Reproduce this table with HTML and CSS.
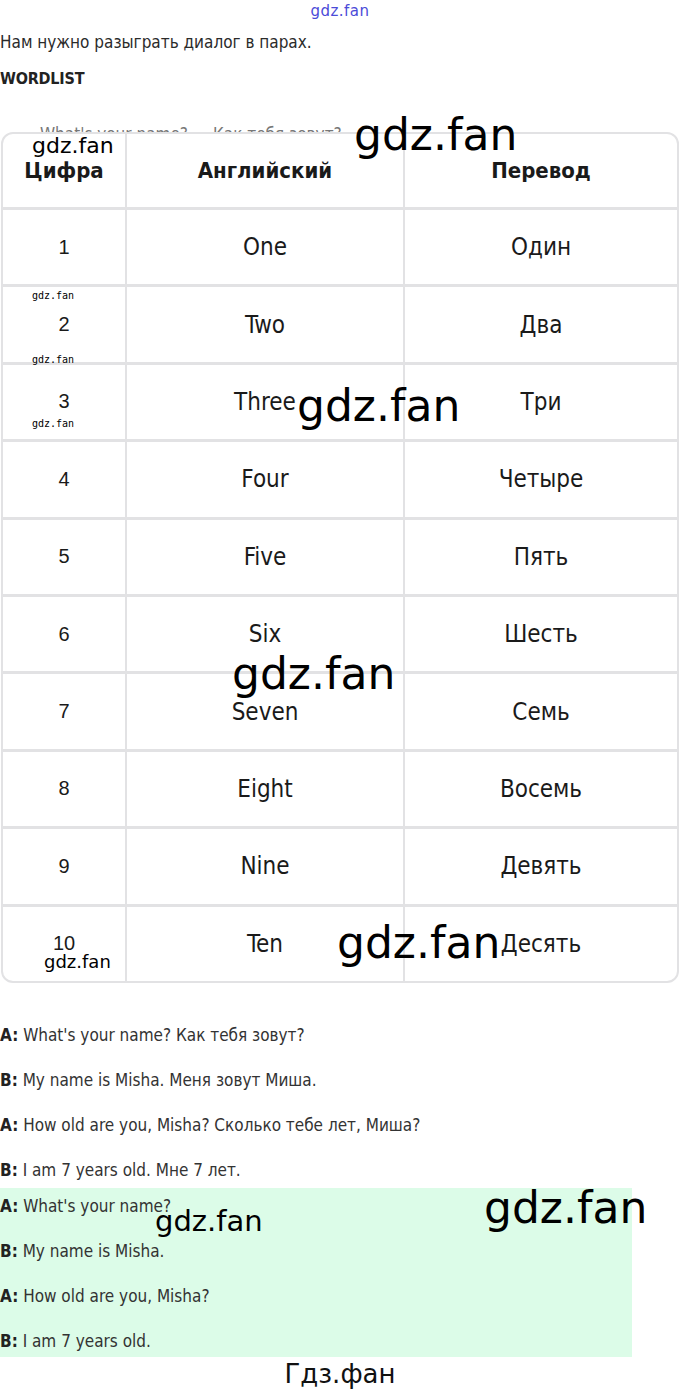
FILE: index.html
```html
<!DOCTYPE html>
<html lang="ru">
<head>
<meta charset="utf-8">
<title>Wordlist</title>
<link rel="stylesheet" href="styles.css">
</head>
<body>
<div class="site-mark">gdz.fan</div>
<p class="intro">Нам нужно разыграть диалог в парах.</p>
<h3 class="wordlist">WORDLIST</h3>
<p class="faded">What's your name? — Как тебя зовут?</p>
<div class="card">
  <div class="grid">
    <div class="cell head">Цифра</div>
    <div class="cell head">Английский</div>
    <div class="cell head">Перевод</div>
    <div class="cell num">1</div><div class="cell">One</div><div class="cell">Один</div>
    <div class="cell num">2</div><div class="cell">Two</div><div class="cell">Два</div>
    <div class="cell num">3</div><div class="cell">Three</div><div class="cell">Три</div>
    <div class="cell num">4</div><div class="cell">Four</div><div class="cell">Четыре</div>
    <div class="cell num">5</div><div class="cell">Five</div><div class="cell">Пять</div>
    <div class="cell num">6</div><div class="cell">Six</div><div class="cell">Шесть</div>
    <div class="cell num">7</div><div class="cell">Seven</div><div class="cell">Семь</div>
    <div class="cell num">8</div><div class="cell">Eight</div><div class="cell">Восемь</div>
    <div class="cell num">9</div><div class="cell">Nine</div><div class="cell">Девять</div>
    <div class="cell num">10</div><div class="cell">Ten</div><div class="cell">Десять</div>
  </div>
</div>
<div class="dialog">
  <p><b>A:</b> What's your name? Как тебя зовут?</p>
  <p><b>B:</b> My name is Misha. Меня зовут Миша.</p>
  <p><b>A:</b> How old are you, Misha? Сколько тебе лет, Миша?</p>
  <p><b>B:</b> I am 7 years old. Мне 7 лет.</p>
</div>
<div class="dialog green">
  <p><b>A:</b> What's your name?</p>
  <p><b>B:</b> My name is Misha.</p>
  <p><b>A:</b> How old are you, Misha?</p>
  <p><b>B:</b> I am 7 years old.</p>
</div>
<div class="footer-mark">Гдз.фан</div>

<div class="wm wm-big wm1">gdz.fan</div>
<div class="wm wm2">gdz.fan</div>
<div class="wm wm-tiny wm3">gdz.fan</div>
<div class="wm wm-tiny wm4">gdz.fan</div>
<div class="wm wm-tiny wm5">gdz.fan</div>
<div class="wm wm-big wm6">gdz.fan</div>
<div class="wm wm-big wm7">gdz.fan</div>
<div class="wm wm-big wm8">gdz.fan</div>
<div class="wm wm9">gdz.fan</div>
<div class="wm wm10">gdz.fan</div>
<div class="wm wm-big wm11">gdz.fan</div>
</body>
</html>
```
FILE: styles.css
```css
html, body {
  margin: 0;
  padding: 0;
  background: #fff;
}
body {
  position: relative;
  width: 680px;
  min-height: 1391px;
  font-family: "DejaVu Sans Condensed", "Liberation Sans", sans-serif;
  color: #2b2b2b;
}
.site-mark {
  height: 24px;
  text-align: center;
  font-family: "DejaVu Sans", sans-serif;
  font-size: 15px;
  line-height: 22px;
  color: #4b4bd8;
  letter-spacing: 0.5px;
}
.intro {
  margin: 6px 0 0;
  font-size: 17px;
  line-height: 24px;
}
.wordlist {
  margin: 15px 0 0;
  font-size: 16px;
  line-height: 20px;
  font-weight: 700;
  color: #222;
  letter-spacing: -0.2px;
}
.faded {
  margin: 35px 0 0 40px;
  font-size: 17px;
  line-height: 20px;
  color: #777;
}
.card {
  position: relative;
  margin: -12px 1px 0 1px;
  border: 2px solid #e2e2e4;
  border-radius: 12px;
  overflow: hidden;
  background: #e2e2e4;
}
.grid {
  display: grid;
  grid-template-columns: 122px 276px 1fr;
  grid-template-rows: 73px;
  grid-auto-rows: 74.4px;
  column-gap: 2px;
  row-gap: 3px;
}
.cell {
  background: #fff;
  display: flex;
  align-items: center;
  justify-content: center;
  font-size: 24px;
  color: #1a1a1a;
}
.cell.head {
  font-weight: 700;
  font-size: 22px;
}
.cell.num {
  font-size: 20px;
  font-family: "Liberation Sans", sans-serif;
}
.dialog {
  margin-top: 40px;
}
.dialog p {
  margin: 0 0 21px;
  font-size: 17px;
  line-height: 24px;
  color: #333;
}
.dialog p b {
  color: #222;
}
.dialog p:last-child {
  margin-bottom: 0;
}
.green {
  margin-top: 6px;
  width: 632px;
  padding: 6px 0 4px;
  background: #dcfce8;
}
.footer-mark {
  text-align: center;
  font-family: "DejaVu Sans", sans-serif;
  font-size: 26px;
  line-height: 34px;
  color: #111;
}
.wm {
  position: absolute;
  font-family: "DejaVu Sans", sans-serif;
  color: #000;
  line-height: 1;
  white-space: nowrap;
}
.wm-big { font-size: 44px; }
.wm-tiny {
  font-family: "DejaVu Sans Mono", monospace;
  font-size: 10px;
}
.wm1 { left: 354px; top: 113px; }
.wm2 { left: 32px; top: 135px; font-size: 22px; }
.wm3 { left: 32px; top: 291px; }
.wm4 { left: 32px; top: 355px; }
.wm5 { left: 32px; top: 419px; }
.wm6 { left: 297px; top: 384px; }
.wm7 { left: 232px; top: 652px; }
.wm8 { left: 337px; top: 921px; }
.wm9 { left: 44px; top: 953px; font-size: 18px; }
.wm10 { left: 155px; top: 1207px; font-size: 29px; }
.wm11 { left: 484px; top: 1186px; }
```
